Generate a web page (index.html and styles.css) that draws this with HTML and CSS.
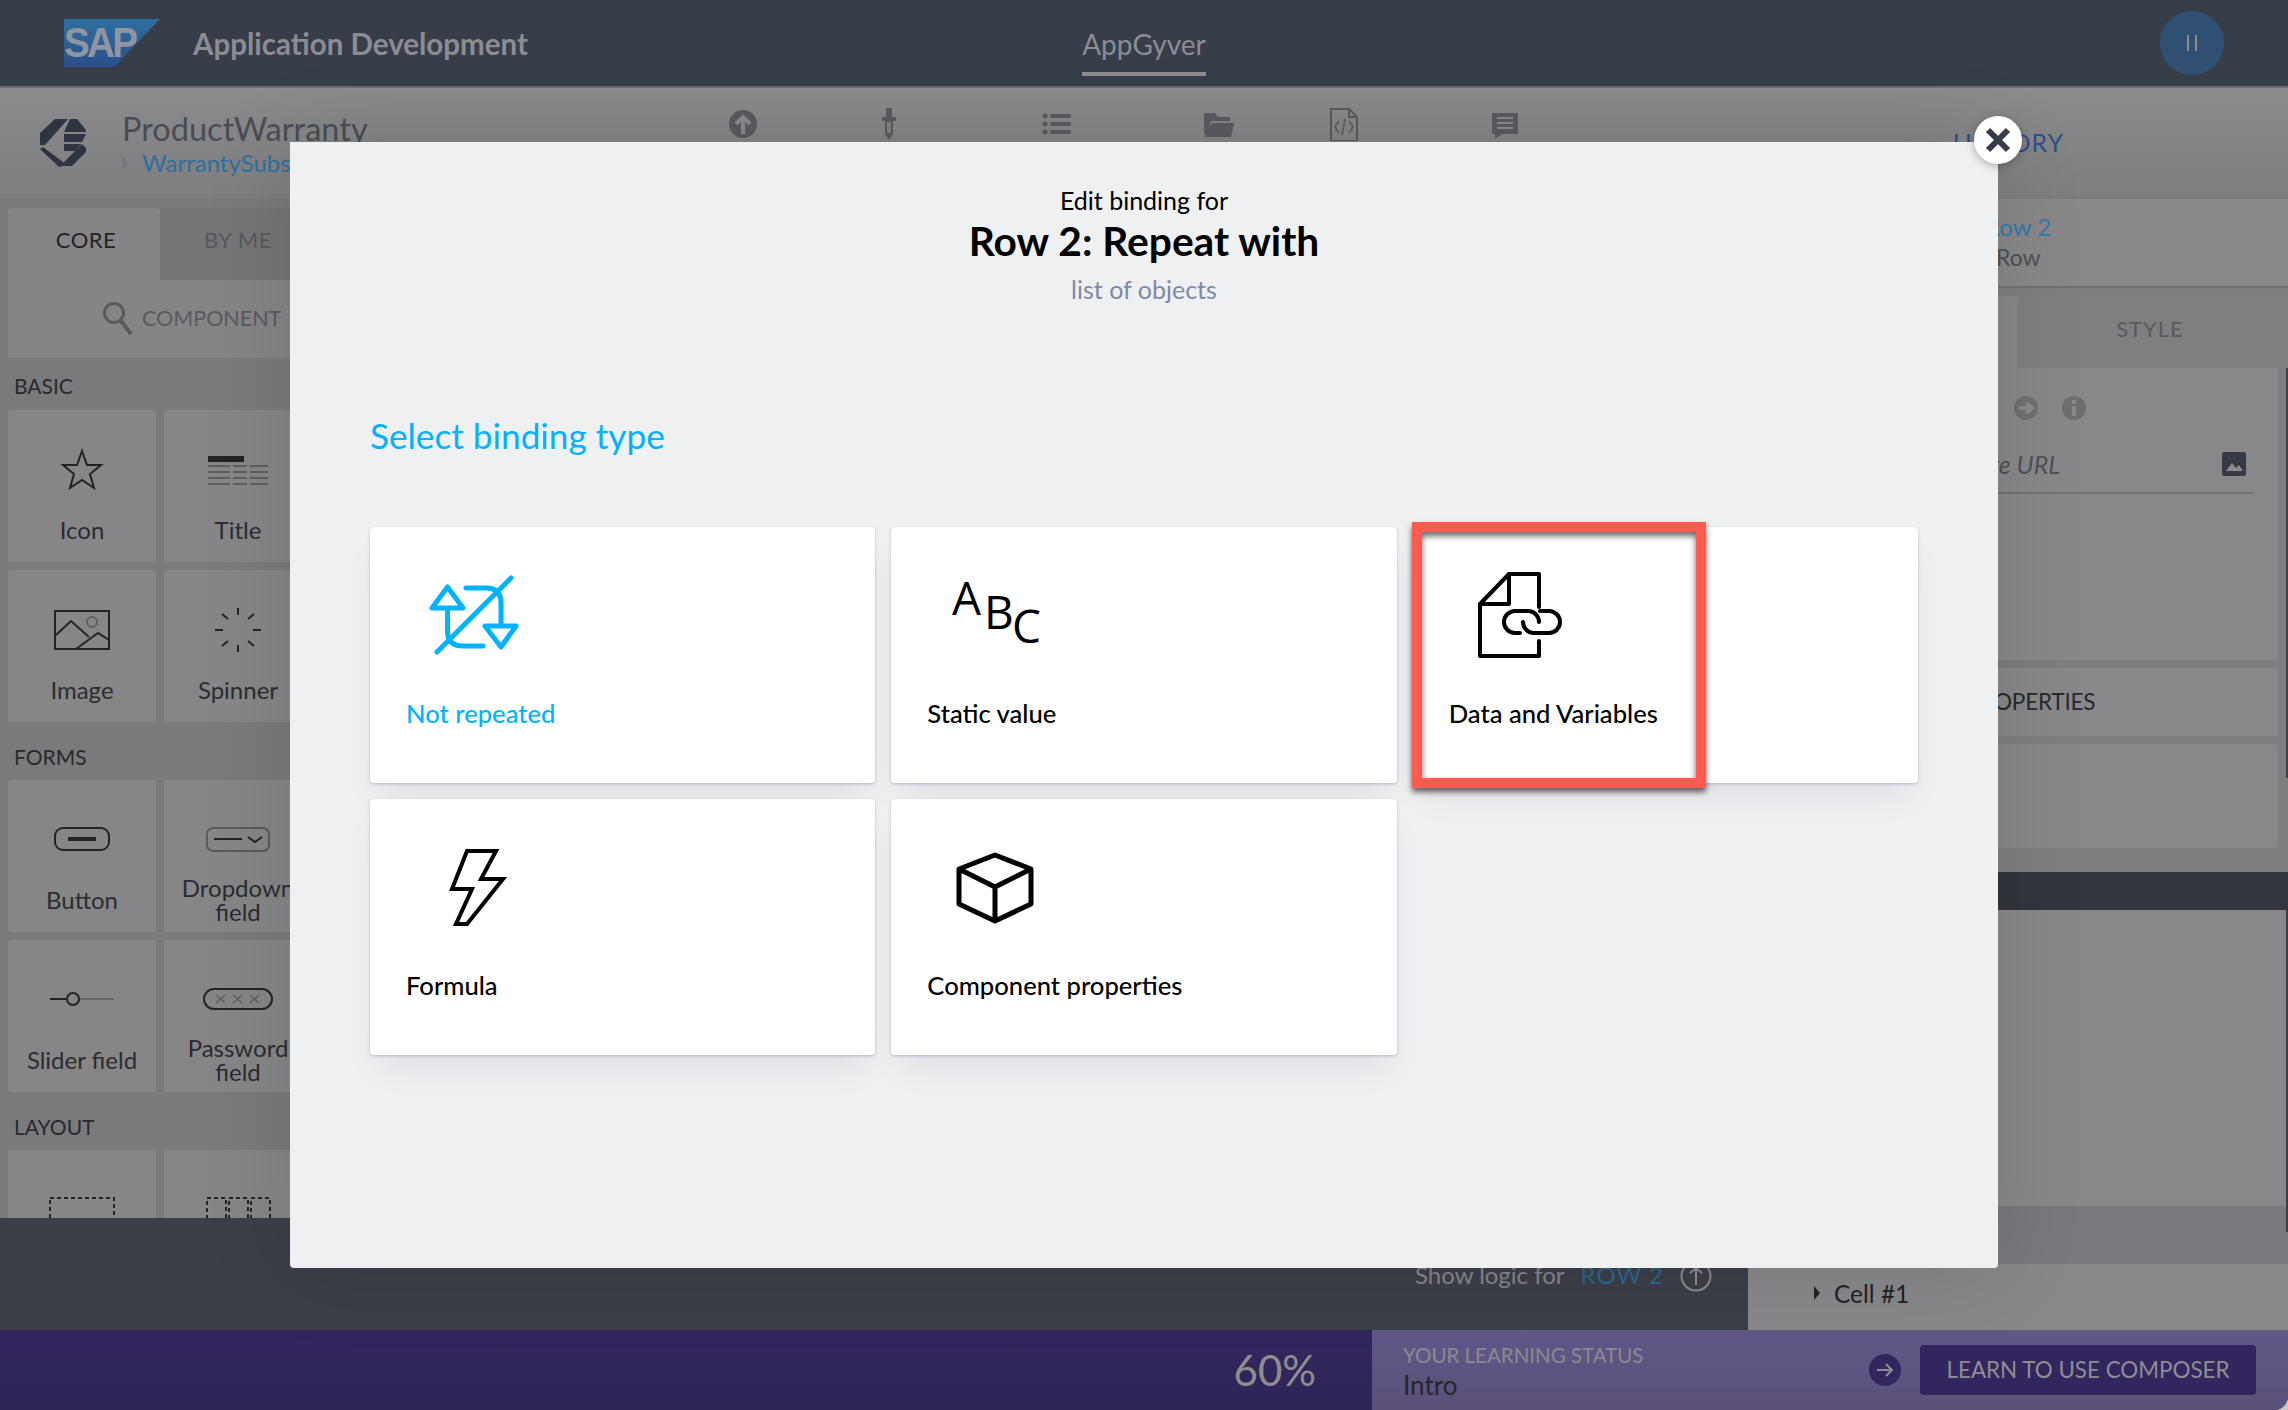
FILE: index.html
```html
<!DOCTYPE html>
<html>
<head>
  <title>Application Development</title>
  <link rel="stylesheet" href="styles.css">
</head>
<body>
<div class="app">
  <div class="topbar">
    <svg class="sap" width="96" height="48" viewBox="0 0 96 48">
      <defs><linearGradient id="sapblue" x1="0" y1="0" x2="0" y2="1"><stop offset="0" stop-color="#2f6f9f"/><stop offset="1" stop-color="#2b4f8b"/></linearGradient></defs>
      <polygon points="0,0 96,0 50,48 0,48" fill="url(#sapblue)"/>
      <text x="0" y="38" class="saptext" transform="scale(0.92 1)">SAP</text>
    </svg>
    <div class="apptitle">Application Development</div>
    <div class="apptab">AppGyver</div>
    <div class="pause"><span></span><span></span></div>
  </div>

  <div class="subbar">
    <svg class="logo" width="48" height="50" viewBox="0 0 48 50">
      <path d="M15 1H28L5 27H0V15ZM3 29 27 47 19 49 0 31ZM30 1H37L46 12V14H24ZM24 16H46L42 24H24ZM24 26H41L35 33H24ZM42 26 46 30V34L32 48H20L35 33Z" fill="#2f3442"/>
    </svg>
    <div class="project">
      <div class="projname">ProductWarranty</div>
      <div class="projsub"><span class="crumb"></span>WarrantySubscription</div>
    </div>
    <div class="tools">
      <svg class="tool" width="40" height="34" viewBox="0 0 40 34"><circle cx="20" cy="17" r="14" fill="#5a5a60"/><path d="M20 27V10M13 17 20 10 27 17" fill="none" stroke="#8a8a8c" stroke-width="4"/></svg>
      <svg class="tool t2" width="40" height="34" viewBox="0 0 40 34"><path d="M17 1H23V10H27V14H24V27L20 33 16 27V14H13V10H17Z" fill="#5a5a60"/><path d="M18 15H22V26H18Z" fill="#828284"/></svg>
      <svg class="tool t3" width="40" height="34" viewBox="0 0 40 34"><g fill="#5a5a60"><circle cx="8" cy="9" r="2.5"/><circle cx="8" cy="17" r="2.5"/><circle cx="8" cy="25" r="2.5"/><rect x="13" y="7" width="21" height="4" rx="1.5"/><rect x="13" y="15" width="21" height="4" rx="1.5"/><rect x="13" y="23" width="21" height="4" rx="1.5"/></g></svg>
      <svg class="tool t4" width="40" height="34" viewBox="0 0 40 34"><path d="M6 6H16L19 10H31V14H12L9 28H5V7Z" fill="#5a5a60"/><path d="M13 16H35L32 30H6Z" fill="#5a5a60"/></svg>
      <svg class="tool t5" width="40" height="34" viewBox="0 0 40 34"><path d="M8 2H26L34 10V34H8ZM26 2V10H34" fill="none" stroke="#5a5a60" stroke-width="2"/><path d="M16 14 12 20 16 26M26 14 30 20 26 26M22 12 19 28" fill="none" stroke="#5a5a60" stroke-width="1.6"/></svg>
      <svg class="tool t6" width="40" height="34" viewBox="0 0 40 34"><path d="M7 6H33V27H17L10 32V27H7Z" fill="#5a5a60"/><path d="M12 11H28M12 16H28M12 21H28" stroke="#8a8a8c" stroke-width="2"/></svg>
    </div>
    <div class="history">HISTORY</div>
  </div>

  <div class="main">
    <div class="leftcol">
      <div class="sidebar">
        <div class="tabs">
          <div class="tab active">CORE</div>
          <div class="tab">BY ME</div>
        </div>
        <div class="search">
          <svg width="32" height="36" viewBox="0 0 32 36"><circle cx="12" cy="13" r="9.5" fill="none" stroke="#5a5a5e" stroke-width="3"/><path d="M19 21 29 34" stroke="#5a5a5e" stroke-width="4"/></svg>
          <span>COMPONENT</span>
        </div>
        <div class="seclabel">BASIC</div>
        <div class="tiles">
          <div class="tile">
            <svg width="80" height="60" viewBox="0 0 80 60"><path d="M40 11 45 25 59 25 48 34 52 48 40 40 28 48 32 34 21 25 35 25Z" fill="none" stroke="#232326" stroke-width="2"/></svg>
            <div class="tilename">Icon</div>
          </div>
          <div class="tile">
            <svg width="80" height="60" viewBox="0 0 80 60"><rect x="10" y="16" width="36" height="6" fill="#232326"/><path d="M10 26H70M10 32H70M10 38H70M10 44H70" stroke="#5f5f62" stroke-width="2" stroke-dasharray="22 3 14 3"/></svg>
            <div class="tilename">Title</div>
          </div>
          <div class="tile">
            <svg width="80" height="60" viewBox="0 0 80 60"><rect x="13" y="11" width="54" height="38" fill="none" stroke="#232326" stroke-width="2"/><path d="M14 35 29 21 47 37M34 49 56 33 67 40" fill="none" stroke="#232326" stroke-width="2"/><circle cx="50" cy="22" r="5" fill="none" stroke="#5f5f62" stroke-width="2"/></svg>
            <div class="tilename">Image</div>
          </div>
          <div class="tile">
            <svg width="80" height="60" viewBox="0 0 80 60"><path d="M40 8V15M40 45V52M17 30H25M55 30H63M24 14 30 19M50 41 56 46M24 46 30 41M50 19 56 14" stroke="#232326" stroke-width="2"/></svg>
            <div class="tilename">Spinner</div>
          </div>
        </div>
        <div class="seclabel forms">FORMS</div>
        <div class="tiles">
          <div class="tile">
            <svg width="80" height="60" viewBox="0 0 80 60"><rect x="13" y="18" width="54" height="22" rx="8" fill="none" stroke="#232326" stroke-width="2"/><rect x="26" y="27" width="28" height="4" fill="#232326"/></svg>
            <div class="tilename">Button</div>
          </div>
          <div class="tile">
            <svg width="80" height="60" viewBox="0 0 80 60"><rect x="9" y="18" width="62" height="23" rx="6" fill="none" stroke="#5a5a5e" stroke-width="2"/><path d="M16 29H44" stroke="#232326" stroke-width="2"/><path d="M50 27 57 32 64 27" fill="none" stroke="#232326" stroke-width="2"/></svg>
            <div class="tilename">Dropdown field</div>
          </div>
          <div class="tile">
            <svg width="80" height="60" viewBox="0 0 80 60"><path d="M8 29H24" stroke="#232326" stroke-width="2"/><path d="M37 29H72" stroke="#5f5f62" stroke-width="1.5"/><circle cx="31" cy="29" r="6" fill="none" stroke="#232326" stroke-width="2"/></svg>
            <div class="tilename">Slider field</div>
          </div>
          <div class="tile">
            <svg width="80" height="60" viewBox="0 0 80 60"><rect x="6" y="19" width="68" height="20" rx="10" fill="none" stroke="#232326" stroke-width="2"/><path d="M18 25 27 33M27 25 18 33M35 25 44 33M44 25 35 33M52 25 61 33M61 25 52 33" stroke="#5f5f62" stroke-width="1.5"/></svg>
            <div class="tilename">Password field</div>
          </div>
        </div>
        <div class="seclabel layout">LAYOUT</div>
        <div class="tiles">
          <div class="tile">
            <svg width="80" height="60" viewBox="0 0 80 60"><rect x="8" y="18" width="64" height="30" fill="none" stroke="#232326" stroke-width="2" stroke-dasharray="4 3"/></svg>
          </div>
          <div class="tile">
            <svg width="80" height="60" viewBox="0 0 80 60"><g fill="none" stroke="#232326" stroke-width="2" stroke-dasharray="4 3"><rect x="9" y="18" width="19" height="30"/><rect x="31" y="18" width="19" height="30"/><rect x="53" y="18" width="19" height="30"/></g></svg>
          </div>
        </div>
      </div>
      <div class="logicbar">
        <span class="logictext">Show logic for</span>
        <span class="logicrow">ROW 2</span>
        <svg width="32" height="32" viewBox="0 0 32 32"><circle cx="16" cy="16" r="14.5" fill="none" stroke="#8a8a8c" stroke-width="2"/><path d="M16 25V8M10 13 16 8 22 13" fill="none" stroke="#8a8a8c" stroke-width="2"/></svg>
      </div>
    </div>

    <div class="rightcol">
      <div class="compinfo">
        <div class="compname">Row 2</div>
        <div class="comptype">Row</div>
      </div>
      <div class="proptabs">
        <div class="proptab active">PROPERTIES</div>
        <div class="proptab">STYLE</div>
      </div>
      <div class="propcard first">
        <div class="propicons">
          <svg width="24" height="24" viewBox="0 0 24 24"><circle cx="12" cy="12" r="12" fill="#6f6f72"/><path d="M5 12H14M12 7 18 12 12 17" fill="none" stroke="#8a8a8c" stroke-width="4"/></svg>
          <svg width="24" height="24" viewBox="0 0 24 24"><circle cx="12" cy="12" r="12" fill="#6f6f72"/><rect x="10" y="10" width="4" height="10" fill="#8a8a8c"/><rect x="10" y="4" width="4" height="4" fill="#8a8a8c"/></svg>
        </div>
        <div class="urlfield">
          <span class="urltext">Image URL</span>
          <svg width="24" height="24" viewBox="0 0 24 24"><rect width="24" height="24" rx="2" fill="#363a46"/><path d="M4 19 10 11 14 16 17 13 21 19Z" fill="#8a8a8c"/></svg>
        </div>
      </div>
      <div class="propcard band">PROPERTIES</div>
      <div class="propcard blank"></div>
      <div class="darkbar"></div>
      <div class="treearea"></div>
      <div class="treerow"></div>
      <div class="treecell"><span class="tri"></span>Cell #1</div>
      <div class="scrollbar upper"></div>
      <div class="scrollbar lower"></div>
    </div>
  </div>

  <div class="footer">
    <div class="percent">60%</div>
    <div class="learn">
      <div class="learntext">
        <div class="learnlabel">YOUR LEARNING STATUS</div>
        <div class="learnname">Intro</div>
      </div>
      <svg class="learnarrow" width="32" height="32" viewBox="0 0 32 32"><circle cx="16" cy="16" r="16" fill="#33265f"/><path d="M8 16H23M17 10 23 16 17 22" fill="none" stroke="#8f8d92" stroke-width="2"/></svg>
      <div class="learnbtn">LEARN TO USE COMPOSER</div>
    </div>
  </div>

  <div class="modal">
    <div class="close">
      <svg width="26" height="26" viewBox="0 0 26 26"><path d="M3 3 23 23M23 3 3 23" stroke="#373c49" stroke-width="6"/></svg>
    </div>
    <div class="modalhead">
      <div class="edit">Edit binding for</div>
      <div class="bindname">Row 2: Repeat with</div>
      <div class="bindtype">list of objects</div>
    </div>
    <div class="selecttitle">Select binding type</div>
    <div class="cards">
      <div class="card selected">
        <svg class="cardicon" width="110" height="90" viewBox="0 0 110 90">
          <g fill="none" stroke="#00b2ff" stroke-width="5" stroke-linecap="round" stroke-linejoin="round">
            <path d="M27.5 18 43 39H12ZM27.5 39V62Q27.5 77 43 77H63"/>
            <path d="M46 19H66Q81 19 81 34V57M65 57H96L81 78Z"/>
            <path d="M91 9 17 83"/>
          </g>
        </svg>
        <div class="cardname">Not repeated</div>
      </div>
      <div class="card">
        <svg class="cardicon" width="110" height="90" viewBox="0 0 110 90">
          <text x="11" y="46" class="abc">A</text>
          <text x="43" y="60" class="abc">B</text>
          <text x="71" y="74" class="abc">C</text>
        </svg>
        <div class="cardname">Static value</div>
      </div>
      <div class="card">
        <svg class="cardicon" width="110" height="90" viewBox="0 0 110 90">
          <g fill="none" stroke="#000" stroke-width="4" stroke-linejoin="round" stroke-linecap="round">
            <path d="M76 38V5H46L17 35V87H76V72"/>
            <path d="M46 5V35H17"/>
            <path d="M57 64H52A11 11 0 0 1 52 42H66A11 11 0 0 1 76 53"/>
            <path d="M77 42H86A11 11 0 0 1 86 64H70A11 11 0 0 1 60 53"/>
          </g>
        </svg>
        <div class="cardname">Data and Variables</div>
      </div>
      <div class="card">
        <svg class="cardicon" width="110" height="90" viewBox="0 0 110 90">
          <path d="M47 10H76L61 38H83L47 83H36L52 48H32Z" fill="none" stroke="#000" stroke-width="4"/>
        </svg>
        <div class="cardname">Formula</div>
      </div>
      <div class="card">
        <svg class="cardicon" width="110" height="90" viewBox="0 0 110 90">
          <path d="M54 14 90 28V63L54 80 18 63V28ZM18 28 54 46 90 28M54 46V80" fill="none" stroke="#000" stroke-width="5" stroke-linejoin="round"/>
        </svg>
        <div class="cardname">Component properties</div>
      </div>
    </div>
    <div class="highlight"></div>
  </div>
</div>
</body>
</html>
```

FILE: styles.css
```css
html, body {
  margin: 0;
  padding: 0;
}
body {
  background-color: #c9c9cc;
  font-family: "Lato", "Open Sans", sans-serif;
}
svg {
  display: block;
  flex-shrink: 0;
}

.app {
  position: relative;
  width: 2288px;
  height: 1410px;
  display: flex;
  flex-direction: column;
  overflow: hidden;
  border-bottom-right-radius: 14px;
}

/* top bar */
.topbar {
  height: 86px;
  flex-shrink: 0;
  display: flex;
  align-items: center;
  position: relative;
  background-color: #383d4a;
  border-bottom: 2px solid #6b6c70;
}
.sap {
  margin-left: 64px;
}
.saptext {
  font-family: "Liberation Sans", sans-serif;
  font-size: 42px;
  font-weight: bold;
  letter-spacing: -3px;
  fill: #8f96a0;
}
.apptitle {
  margin-left: 33px;
  font-size: 29.5px;
  font-weight: bold;
  color: #8a8d94;
}
.apptab {
  position: absolute;
  left: 1082px;
  width: 124px;
  top: 27px;
  height: 45px;
  text-align: center;
  font-size: 28px;
  color: #8b8d93;
  border-bottom: 4px solid #8b8d93;
}
.pause {
  margin-left: auto;
  margin-right: 64px;
  width: 64px;
  height: 64px;
  border-radius: 50%;
  background-color: #2f4f73;
  display: flex;
  align-items: center;
  justify-content: center;
  gap: 6px;
}
.pause span {
  width: 2px;
  height: 16px;
  background-color: #8a8d94;
}

/* second bar */
.subbar {
  height: 110px;
  flex-shrink: 0;
  display: flex;
  align-items: center;
  background: linear-gradient(#8b8b8d, #7e7e80);
}
.logo {
  margin-left: 40px;
}
.project {
  margin-left: 34px;
  width: 500px;
  padding-top: 2px;
}
.projname {
  font-size: 32.5px;
  line-height: 38px;
  color: #4a4c54;
  white-space: nowrap;
}
.projsub {
  display: flex;
  align-items: center;
  font-size: 24px;
  line-height: 30px;
  color: #2f6f9c;
  white-space: nowrap;
}
.crumb {
  width: 0;
  height: 0;
  margin-right: 13px;
  border-left: 7px solid #76777c;
  border-top: 7px solid transparent;
  border-bottom: 7px solid transparent;
}
.tools {
  display: flex;
  margin-left: 101px;
  margin-top: -38px;
}
.t2 { margin-left: 106px; }
.t3 { margin-left: 128px; }
.t4 { margin-left: 122px; }
.t5 { margin-left: 84px; }
.t6 { margin-left: 122px; }
.history {
  margin-left: auto;
  margin-right: 224px;
  padding-bottom: 2px;
  font-size: 25px;
  letter-spacing: 1px;
  color: #2f4f86;
}

/* main area */
.main {
  flex: 1;
  min-height: 0;
  display: flex;
}
.leftcol {
  width: 1748px;
  display: flex;
  flex-direction: column;
  background-color: #7a7a7c;
}
.sidebar {
  height: 1020px;
  width: 320px;
  overflow: hidden;
  padding: 10px 8px 0;
  box-sizing: border-box;
}
.tabs {
  display: flex;
  height: 72px;
}
.tab {
  width: 154px;
  box-sizing: border-box;
  padding-left: 4px;
  font-size: 22px;
  letter-spacing: 0.5px;
  line-height: 64px;
  text-align: center;
  color: #58585c;
  background-color: #767678;
}
.tab.active {
  color: #232326;
  background-color: #858587;
  border-radius: 4px 4px 0 0;
}
.search {
  height: 78px;
  background-color: #858587;
  display: flex;
  align-items: center;
  padding-left: 94px;
  padding-bottom: 2px;
  box-sizing: border-box;
  gap: 8px;
  font-size: 21.5px;
  color: #5a5a5e;
  white-space: nowrap;
}
.seclabel {
  padding-left: 6px;
  height: 52px;
  line-height: 56px;
  font-size: 21px;
  color: #29292c;
}
.seclabel.forms,
.seclabel.layout {
  height: 58px;
  line-height: 70px;
}
.tiles {
  display: grid;
  grid-template-columns: 148px 148px;
  gap: 8px;
}
.tile {
  height: 152px;
  padding-top: 30px;
  box-sizing: border-box;
  background-color: #868688;
  border-radius: 3px;
  display: flex;
  flex-direction: column;
  align-items: center;
}
.tilename {
  margin-top: 6px;
  width: 124px;
  height: 48px;
  display: flex;
  align-items: center;
  justify-content: center;
  text-align: center;
  font-size: 24px;
  line-height: 24px;
  color: #2c2c30;
}
.logicbar {
  height: 112px;
  background-color: #3c3f47;
  display: flex;
  justify-content: flex-end;
  align-items: flex-start;
  padding: 42px 36px 0 0;
  gap: 16px;
  font-size: 24px;
  box-sizing: border-box;
}
.logictext {
  color: #85868a;
}
.logicrow {
  letter-spacing: 1px;
  color: #2b668f;
}

/* right panel */
.rightcol {
  flex: 1;
  position: relative;
  display: flex;
  flex-direction: column;
  background-color: #7e7e80;
}
.compinfo {
  height: 90px;
  background-color: #88888a;
  border-bottom: 2px solid #717173;
  border-top: 1px solid #7a7a7c;
  box-sizing: border-box;
  padding: 13px 0 0 237px;
}
.compname {
  font-size: 24px;
  line-height: 30px;
  color: #2f7aa8;
}
.comptype {
  margin-left: 11px;
  font-size: 23px;
  line-height: 30px;
  color: #4f4f53;
}
.proptabs {
  display: flex;
  height: 72px;
  margin-top: 8px;
}
.proptab {
  font-size: 22px;
  line-height: 66px;
  text-align: center;
  color: #5a5a5e;
}
.proptab.active {
  width: 270px;
  background-color: #88888a;
  border-radius: 0 4px 0 0;
  color: #88888a;
}
.proptab:last-child {
  flex: 1;
  padding-right: 6px;
  background-color: #7f7f81;
  letter-spacing: 1px;
}
.propcard {
  width: 530px;
  background-color: #88888a;
  flex-shrink: 0;
}
.propcard.first {
  height: 292px;
}
.propicons {
  display: flex;
  gap: 24px;
  padding: 28px 0 0 266px;
}
.urlfield {
  margin-top: 18px;
  width: 506px;
  height: 56px;
  border-bottom: 2px solid #717173;
  box-sizing: border-box;
  display: flex;
  align-items: center;
  justify-content: space-between;
  padding: 0 8px 2px 200px;
}
.urltext {
  font-style: italic;
  font-size: 25px;
  color: #505055;
}
.propcard.band {
  height: 68px;
  margin-top: 8px;
  line-height: 68px;
  box-sizing: border-box;
  padding-left: 219px;
  font-size: 22.5px;
  letter-spacing: -0.2px;
  color: #29292c;
}
.propcard.blank {
  height: 104px;
  margin-top: 8px;
  border-radius: 4px;
}
.darkbar {
  height: 38px;
  margin-top: 24px;
  background-color: #32353d;
}
.treearea {
  height: 296px;
  background-color: #88888a;
}
.treerow {
  height: 58px;
  background-color: #78797c;
}
.treecell {
  flex: 1;
  background-color: #88888a;
  display: flex;
  align-items: center;
  padding-left: 66px;
  padding-bottom: 8px;
  font-size: 24.5px;
  color: #232326;
}
.tri {
  width: 0;
  height: 0;
  margin-right: 14px;
  border-left: 6px solid #232326;
  border-top: 7px solid transparent;
  border-bottom: 7px solid transparent;
}
.scrollbar {
  position: absolute;
  left: 538px;
  width: 2px;
  background-color: #3a3e4a;
}
.scrollbar.upper {
  top: 170px;
  height: 410px;
}
.scrollbar.lower {
  top: 712px;
  height: 322px;
}

/* footer */
.footer {
  height: 80px;
  flex-shrink: 0;
  display: flex;
  background: linear-gradient(#33265f, #2f2556);
}
.percent {
  width: 1316px;
  text-align: right;
  font-size: 42px;
  line-height: 80px;
  color: #8e8e90;
}
.learn {
  margin-left: 56px;
  flex: 1;
  display: flex;
  align-items: center;
  padding-left: 31px;
  padding-right: 32px;
  background: linear-gradient(#605888, #5a5079);
}
.learntext {
  flex: 1;
  padding-top: 5px;
}
.learnlabel {
  font-size: 20.5px;
  line-height: 24px;
  color: #8c8a8f;
}
.learnname {
  font-size: 26px;
  line-height: 36px;
  color: #26262a;
}
.learnarrow {
  margin-right: 19px;
}
.learnbtn {
  width: 336px;
  height: 50px;
  border-radius: 4px;
  background-color: #33265f;
  text-align: center;
  line-height: 50px;
  font-size: 22.4px;
  color: #8f8d92;
}

/* modal */
.modal {
  position: absolute;
  left: 290px;
  top: 142px;
  width: 1708px;
  height: 1126px;
  box-sizing: border-box;
  padding: 43px 80px 0;
  background-color: #eff0f2;
  border-radius: 0 0 4px 4px;
  box-shadow: 0 0 90px rgba(0, 0, 0, 0.12);
}
.close {
  position: absolute;
  top: -26px;
  right: -24px;
  width: 48px;
  height: 48px;
  border-radius: 50%;
  background-color: #fff;
  box-shadow: 0 2px 8px rgba(0, 0, 0, 0.3);
  display: flex;
  align-items: center;
  justify-content: center;
}
.modalhead {
  text-align: center;
}
.edit {
  font-size: 25px;
  line-height: 30px;
  color: #000;
}
.bindname {
  font-size: 40.7px;
  font-weight: bold;
  line-height: 52px;
  color: #000;
}
.bindtype {
  margin-top: 4px;
  font-size: 25px;
  line-height: 36px;
  color: #7d89a6;
}
.selecttitle {
  margin-top: 105px;
  font-size: 35.2px;
  line-height: 46px;
  color: #00b2ff;
}
.cards {
  margin-top: 69px;
  display: grid;
  grid-template-columns: repeat(3, 1fr);
  gap: 16px;
}
.card {
  height: 256px;
  box-sizing: border-box;
  padding: 42px 36px 0;
  background-color: #fff;
  border-radius: 4px;
  box-shadow: 0 1px 3px rgba(120, 125, 145, 0.45), 0 20px 30px -12px rgba(120, 125, 145, 0.18);
}
.cardicon {
  margin-left: 14px;
}
.cardname {
  margin-top: 38px;
  font-size: 25.6px;
  font-weight: 500;
  line-height: 32px;
  color: #000;
}
.card.selected .cardname {
  color: #00b2ff;
}
.abc {
  font-family: "Open Sans", sans-serif;
  font-size: 46px;
  fill: #000;
}
.highlight {
  position: absolute;
  left: 1122px;
  top: 380px;
  width: 294px;
  height: 266px;
  box-sizing: border-box;
  border: 10px solid #ff5a4f;
  box-shadow: 0 4px 6px rgba(0, 0, 0, 0.6), inset 0 4px 6px rgba(0, 0, 0, 0.6);
}
```
